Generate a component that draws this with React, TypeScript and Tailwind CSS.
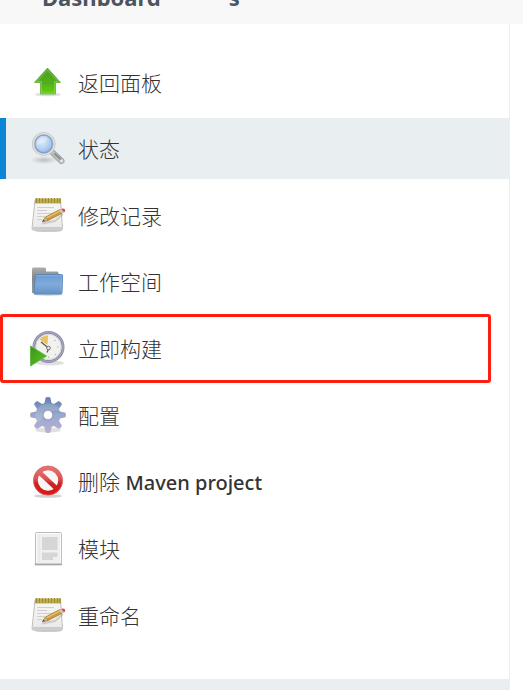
import React from "react";

const iconProps = {
  viewBox: "0 0 36 36",
  className: "size-9 shrink-0 overflow-visible",
  "aria-hidden": true,
} as const;

function UpArrowIcon() {
  return (
    <svg {...iconProps}>
      <defs>
        <linearGradient id="arrow-fill" x1="0" y1="0" x2="0" y2="1">
          <stop offset="0" stopColor="#4f9f24" />
          <stop offset="0.6" stopColor="#53ae1a" />
          <stop offset="1" stopColor="#66d40c" />
        </linearGradient>
      </defs>
      <ellipse cx="18" cy="30.5" rx="13" ry="1.8" fill="#000" opacity="0.13" />
      <path d="M17.5 4 30.5 18.5H25.5V30H10.5V18.5H4.5Z" fill="url(#arrow-fill)" stroke="#74b652" strokeWidth="1" strokeLinejoin="round" />
      <path d="M17.5 6 28 17.5H24.5V29H11.5V17.5H7Z" fill="none" stroke="#9be069" strokeWidth="0.8" opacity="0.6" />
    </svg>
  );
}

function SearchIcon() {
  return (
    <svg {...iconProps}>
      <defs>
        <radialGradient id="lens-fill" cx="0.4" cy="0.35" r="0.7">
          <stop offset="0" stopColor="#dfebfa" />
          <stop offset="0.6" stopColor="#b5d0ef" />
          <stop offset="1" stopColor="#8db2e0" />
        </radialGradient>
        <radialGradient id="lens-shadow">
          <stop offset="0" stopColor="#000" stopOpacity="0.2" />
          <stop offset="1" stopColor="#000" stopOpacity="0" />
        </radialGradient>
      </defs>
      <ellipse cx="14" cy="30" rx="14" ry="4" fill="url(#lens-shadow)" />
      <path d="M22 22 31.5 31" stroke="#a6a6a6" strokeWidth="6" strokeLinecap="round" />
      <path d="M22 22 31.5 31" stroke="#bebebe" strokeWidth="4" strokeLinecap="round" />
      <path d="M24.5 23.500 31 29.500" stroke="#8d8d8d" strokeWidth="2" />
      <circle cx="31.6" cy="31" r="1.4" fill="#e8e8e8" />
      <circle cx="13.7" cy="14" r="10.5" fill="#e9e9e6" stroke="#c2c2c2" strokeWidth="2.6" />
      <circle cx="13.7" cy="14" r="10.5" fill="none" stroke="#e3e3e0" strokeWidth="1.2" />
      <circle cx="13.7" cy="14" r="8.8" fill="url(#lens-fill)" stroke="#7e9fcc" strokeWidth="1.2" />
      <path d="M7 15C7 9 11 7 17 7.5 19 10 13 13 7 15Z" fill="#fff" opacity="0.25" />
    </svg>
  );
}

function NotepadIcon() {
  return (
    <svg {...iconProps}>
      <defs>
        <linearGradient id="pad-fill" x1="0" y1="0" x2="0" y2="1">
          <stop offset="0" stopColor="#f7f7f5" />
          <stop offset="1" stopColor="#e9e9e7" />
        </linearGradient>
      </defs>
      <ellipse cx="18" cy="33.5" rx="14" ry="1.6" fill="#000" opacity="0.2" />
      <path d="M5 3H30.5L32.5 31.5Q32.5 33 31 33H3.5Q2 33 2 31.5Z" fill="url(#pad-fill)" stroke="#c0c0be" strokeWidth="1" />
      <path d="M2.5 30H32.5V32.5H2.5Z" fill="#cbcbc9" />
      <rect x="5" y="1.5" width="26" height="5" fill="#c3b04f" />
      <path d="M6.5 1V6M9.5 1V6M12.5 1V6M15.5 1V6M18.5 1V6M21.5 1V6M24.5 1V6M27.5 1V6M30 1V6" stroke="#9d8b36" strokeWidth="1.2" />
      <path d="M7 10.5H24M7 13.5H17M7 16.5H23M7 19.5H15M7 22.5H12" stroke="#cfcfcf" strokeWidth="1" />
      <path d="M12 26.5 25 24 33 17" fill="none" stroke="#000" strokeWidth="2" opacity="0.14" />
      <path d="M12.5 24.500 15.500 20 30 12.500 32.500 16 18 23.500Z" fill="#d29a3e" stroke="#a67834" strokeWidth="0.8" />
      <path d="M16.5 20.800 31 13.500" stroke="#efc477" strokeWidth="1.2" />
      <path d="M12.500 24.500 15.500 20 18 23.500Z" fill="#d9b988" stroke="#94744a" strokeWidth="0.5" />
      <path d="M12.500 24.500 13.700 22.700 15 24Z" fill="#444" />
      <path d="M29 13 31 12 34 15.500 31.800 16.500Z" fill="#c9c9c9" />
      <path d="M31 12Q33.5 10.800 35 12.500 36 14.700 34 15.500Z" fill="#e04848" />
    </svg>
  );
}

function FolderIcon() {
  return (
    <svg {...iconProps}>
      <defs>
        <linearGradient id="folder-fill" x1="0" y1="0" x2="0" y2="1">
          <stop offset="0" stopColor="#6c9bcf" />
          <stop offset="0.5" stopColor="#80aad9" />
          <stop offset="1" stopColor="#6492c8" />
        </linearGradient>
        <linearGradient id="folder-back" x1="0" y1="0" x2="0" y2="1">
          <stop offset="0" stopColor="#adadad" />
          <stop offset="0.4" stopColor="#888" />
          <stop offset="1" stopColor="#999" />
        </linearGradient>
      </defs>
      <ellipse cx="18" cy="31.5" rx="15" ry="1.5" fill="#000" opacity="0.15" />
      <path d="M2 30V6Q2 4.5 3.5 4.5H14.5Q16 4.5 16 6V8.5H27Q28.5 8.5 28.500 10V30Z" fill="url(#folder-back)" />
      <path d="M6.500 11.500H31.500Q32.700 11.500 32.500 13L32 29.500Q32 31 30.500 31H5Q3.700 31 4 29.500L5.300 13Q5.400 11.500 6.500 11.500Z" fill="url(#folder-fill)" stroke="#5786bd" strokeWidth="1" />
      <path d="M6.500 12.500H31.500L31 29" fill="none" stroke="#a5c6ea" strokeWidth="0.8" opacity="0.5" />
    </svg>
  );
}

function BuildIcon() {
  return (
    <svg {...iconProps}>
      <defs>
        <linearGradient id="play-fill" x1="0" y1="0" x2="1" y2="1">
          <stop offset="0" stopColor="#3b8f1f" />
          <stop offset="1" stopColor="#5bcb1e" />
        </linearGradient>
      </defs>
      <ellipse cx="20" cy="33" rx="14" ry="2.5" fill="#000" opacity="0.12" />
      <circle cx="18.5" cy="17" r="14.5" fill="#f1f1ee" stroke="#8b8dab" strokeWidth="3" />
      <circle cx="18.5" cy="17" r="14.7" fill="none" stroke="#a9abc6" strokeWidth="1" />
      <circle cx="18.5" cy="17" r="12.6" fill="none" stroke="#dadad7" strokeWidth="1" />
      <path d="M17.5 15 9.500 9.500Q13 5.500 18 5.500Z" fill="#e6c35f" />
      <path d="M28.5 17H27M18.500 26.500V28M25.500 10 24.500 11M25 24 26 25" stroke="#bbb" strokeWidth="1.2" />
      <path d="M11 12 18.500 18M19 18 17 22.500" fill="none" stroke="#555" strokeWidth="1.2" />
      <circle cx="18.500" cy="18" r="1.800" fill="#eee" stroke="#666" strokeWidth="0.9" />
      <path d="M0.500 16 16.500 26 0.500 36Z" fill="url(#play-fill)" stroke="#65b946" strokeWidth="1" />
    </svg>
  );
}

function GearIcon() {
  const teeth = [0, 45, 90, 135, 180, 225, 270, 315];
  return (
    <svg {...iconProps}>
      <defs>
        <linearGradient id="gear-fill" gradientUnits="userSpaceOnUse" x1="18" y1="0" x2="18" y2="36">
          <stop offset="0" stopColor="#5f7eae" />
          <stop offset="0.5" stopColor="#9aa8cc" />
          <stop offset="1" stopColor="#b5b1d3" />
        </linearGradient>
        <mask id="gear-mask" maskUnits="userSpaceOnUse" x="-2" y="-2" width="40" height="40">
          <rect x="-2" y="-2" width="40" height="40" fill="#000" />
          <g fill="#fff">
            <circle cx="18" cy="18" r="12.5" />
            {teeth.map((angle) => (
              <path key={angle} d="M14 8 15.700 0.500Q18-0.500 20.300 0.500L22 8Z" transform={`rotate(${angle} 18 18)`} />
            ))}
          </g>
          <circle cx="18" cy="18" r="4.300" fill="#000" />
        </mask>
      </defs>
      <ellipse cx="18" cy="33" rx="13" ry="2.5" fill="#000" opacity="0.12" />
      <circle cx="18" cy="18" r="5" fill="#fff" />
      <g mask="url(#gear-mask)">
        <rect x="-2" y="-2" width="40" height="40" fill="url(#gear-fill)" />
        <path d="M5 17Q8 7 18 6.500 29 7 31 14 22 12 15 18 10 24 8 26 5 22 5 17Z" fill="#fff" opacity="0.15" />
      </g>
      <circle cx="18" cy="18" r="5.200" fill="none" stroke="#8c96b8" strokeWidth="1" opacity="0.6" />
    </svg>
  );
}

function ForbiddenIcon() {
  return (
    <svg {...iconProps}>
      <defs>
        <linearGradient id="ban-stroke" gradientUnits="userSpaceOnUse" x1="18" y1="2" x2="18" y2="33">
          <stop offset="0" stopColor="#e87878" />
          <stop offset="0.45" stopColor="#db5252" />
          <stop offset="0.6" stopColor="#cf2020" />
          <stop offset="1" stopColor="#dc1616" />
        </linearGradient>
      </defs>
      <ellipse cx="18" cy="33" rx="14" ry="1.8" fill="#000" opacity="0.18" />
      <circle cx="18" cy="17.5" r="12.5" fill="#f7f5f5" stroke="url(#ban-stroke)" strokeWidth="4.600" />
      <path d="M9.500 9.500 26.500 25.500" stroke="url(#ban-stroke)" strokeWidth="4.600" />
      <circle cx="18" cy="17.5" r="14.500" fill="none" stroke="#d26a6a" strokeWidth="0.6" />
    </svg>
  );
}

function ModuleIcon() {
  return (
    <svg {...iconProps}>
      <rect x="4.5" y="33" width="27" height="3" fill="#000" opacity="0.12" />
      <rect x="5.5" y="2.5" width="26" height="32" rx="1" fill="#f0f0f0" stroke="#bdbdbd" />
      <rect x="6.5" y="3.5" width="24" height="30" fill="none" stroke="#fafafa" />
      <rect x="5" y="33.500" width="27" height="1.500" fill="#a5a5a5" />
      <path d="M9 5V32" stroke="#e6e6e6" />
      <rect x="12" y="7" width="15.500" height="13" fill="#d6d6d6" />
      <path d="M12 22.500H27.500V27H23V30H12Z" fill="#d6d6d6" />
    </svg>
  );
}

interface Task {
  label: React.ReactNode;
  icon: React.ReactNode;
  active?: boolean;
  highlighted?: boolean;
}

const tasks: Task[] = [
  { label: "返回面板", icon: <UpArrowIcon /> },
  { label: "状态", icon: <SearchIcon />, active: true },
  { label: "修改记录", icon: <NotepadIcon /> },
  { label: "工作空间", icon: <FolderIcon /> },
  { label: "立即构建", icon: <BuildIcon />, highlighted: true },
  { label: "配置", icon: <GearIcon /> },
  { label: <>删除 <span className="text-xl font-medium">Maven project</span></>, icon: <ForbiddenIcon /> },
  { label: "模块", icon: <ModuleIcon /> },
  { label: "重命名", icon: <NotepadIcon /> },
];

export default function App() {
  return (
    <div className="min-h-screen flex flex-col bg-white text-[#333] font-['Noto_Sans','Noto_Sans_CJK_SC',sans-serif]">
      {/* Breadcrumbs */}
      <header className="h-6 flex items-end overflow-hidden bg-[#f8f8f8] pl-[42px] pb-[15px] text-[22px] leading-6 font-bold text-[#4d545d]">
        <a href="#">Dashboard</a>
        <a href="#" className="ml-[68px]">s</a>
      </header>

      <aside className="grow flex flex-col justify-between mr-[13px] border-r border-[#eee]">
        <nav className="mt-[27px] mb-[34px]">
          <ul className="min-h-[594px] flex flex-col justify-between">
            {tasks.map((task, i) => (
              <li key={i} className="relative">
                <a
                  href="#"
                  aria-current={task.active ? "page" : undefined}
                  className={`h-[61px] flex items-center gap-3 border-l-[6px] pl-6 text-[21px] leading-8 font-light ${
                    task.active ? "border-[#0b85d6] bg-[#e9eef1]" : "border-transparent"
                  }`}
                >
                  {task.icon}
                  <span className="pt-0.5">{task.label}</span>
                </a>
                {task.highlighted && (
                  <span className="pointer-events-none absolute left-0 right-[18px] -inset-y-1 rounded-[3px] border-3 border-[#ff1f10]" />
                )}
              </li>
            ))}
          </ul>
        </nav>

        {/* Top edge of the build history panel */}
        <div className="h-[11px] bg-[#e9eef1]" />
      </aside>
    </div>
  );
}
